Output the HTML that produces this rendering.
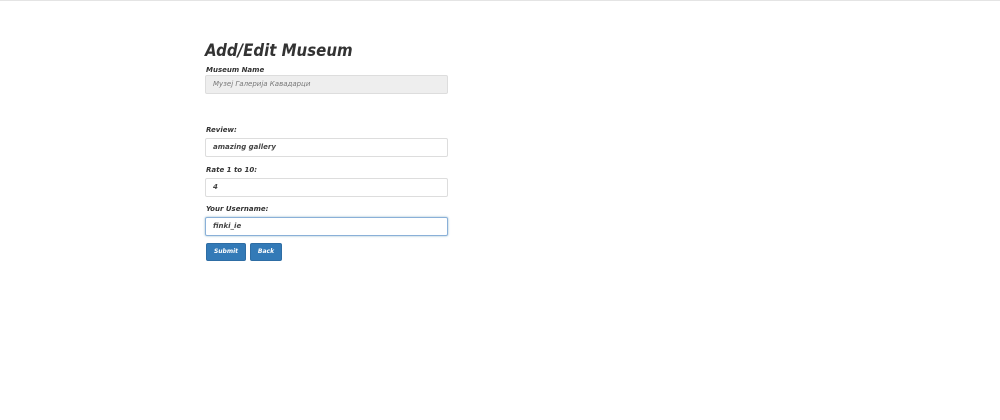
<!DOCTYPE html>
<html><head><style>
body{margin:0;width:1000px;height:420px;background:#fff;font-family:"DejaVu Sans","Liberation Sans",sans-serif;font-style:italic;color:#333;position:relative;overflow:hidden;border-top:1px solid #e4e4e4;box-sizing:border-box}
h1{position:absolute;left:205px;top:39px;margin:0;font-size:15px;font-weight:bold;color:#333;transform:scaleY(1.15);transform-origin:left top}
.l{position:absolute;left:206px;font-size:7px;font-weight:bold;color:#333}
.i{position:absolute;left:205px;width:243px;height:19px;box-sizing:border-box;border:1px solid #ddd;border-radius:2px;font-size:7px;padding-left:7px;line-height:17px;color:#444;font-weight:bold}
.b{position:absolute;top:242px;height:18px;background:#337ab7;border:1px solid #2e6da4;border-radius:2px;color:#fff;font-size:6px;font-weight:bold;text-align:center;line-height:16px;box-sizing:border-box}
</style></head><body>
<h1>Add/Edit Museum</h1>
<div class="l" style="top:65px">Museum Name</div>
<div class="i" style="top:74px;background:#eee;font-weight:normal;color:#777">Музеј Галерија Кавадарци</div>
<div class="l" style="top:125px">Review:</div>
<div class="i" style="top:137px">amazing gallery</div>
<div class="l" style="top:165px">Rate 1 to 10:</div>
<div class="i" style="top:177px">4</div>
<div class="l" style="top:204px">Your Username:</div>
<div class="i" style="top:216px;border-color:#8ab0d8;box-shadow:0 0 2px #9bc">finki_ie</div>
<div class="b" style="left:206px;width:40px">Submit</div>
<div class="b" style="left:250px;width:32px">Back</div>
</body></html>
